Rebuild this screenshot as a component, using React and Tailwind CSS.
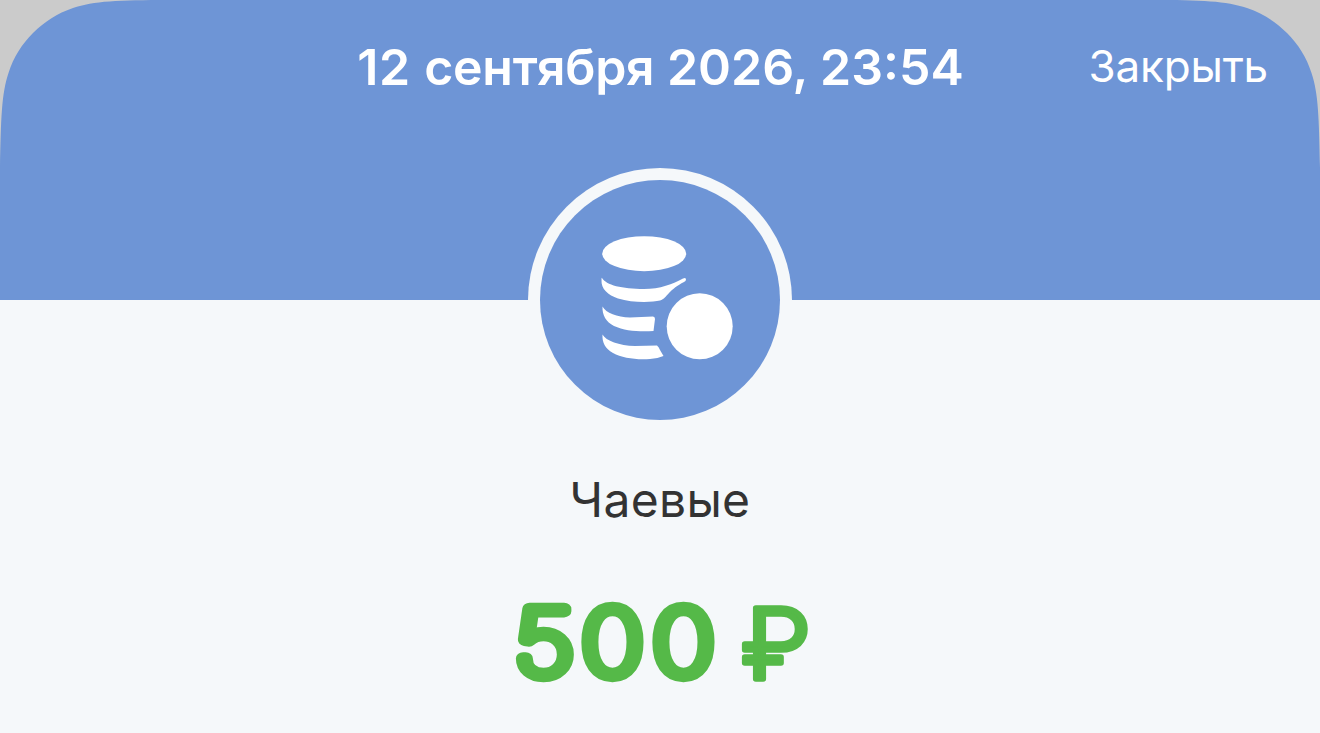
const corner = 'M0 0H168C118 0 94 1 73 8C57 13.500 45 21.500 33 33C22 44 13.500 57 8.500 73C1.500 94 1 118 0 168Z';

function CoinsIcon() {
  return (
    <svg viewBox="600 234 136 128" className="h-[128px] w-[136px] fill-white">
      <ellipse cx="644.200" cy="253.700" rx="42" ry="17.500" />
      <path d="M602 278C606 285 622 289 644 289C660 289 673 284 683 278.500Q686 277 686 279.500Q686 281 684 282C677 285.500 673 289 669 293C666 296 664 299.500 660 300.500C652 302.500 632 303 618 298.500C608 295 601 289 601.500 280Q601.500 277 602 278Z" />
      <path d="M602.500 306.500C606 313 617 317 630 317.500L653 316.500Q655 316.500 655 319L653.500 331C640 332 625 331 614 326C606 322 602 315 602.500 306.500Z" />
      <path d="M602.500 334.500C606 341 619 345.500 635 346L657 345.500Q659 347 660 350L663.500 356Q658 358.500 650 359C636 360 622 358 613 353C605 348.500 602 342 602.500 334.500Z" />
      <circle cx="699.700" cy="326.300" r="33" />
    </svg>
  );
}

export default function App() {
  return (
    <div className="h-[733px] w-full overflow-hidden font-['Inter',sans-serif]">
      <div className="relative flex h-full flex-col items-center bg-[#f5f8fa]">
        <header className="grid h-[300px] w-full shrink-0 grid-cols-[1fr_auto_1fr] items-start bg-[#6e95d6] text-white">
          <h1 className="col-start-2 pt-[37px] pl-px text-[50px] leading-[60px] font-semibold whitespace-nowrap">
            <span className="tracking-[0.7px]">12 </span>
            <span className="tracking-[-0.3px]">сентября</span> 2026, 23:54
          </h1>
          <button className="justify-self-end pt-[36px] pr-[52px] text-[44px] leading-[60px] tracking-[-0.2px]">Закрыть</button>
        </header>
        <svg viewBox="0 0 170 170" className="absolute top-0 left-0 h-[170px] w-[170px] fill-[#cbcbcb]">
          <path d={corner} />
        </svg>
        <svg viewBox="0 0 170 170" className="absolute top-0 right-0 h-[170px] w-[170px] -scale-x-100 fill-[#cbcbcb]">
          <path d={corner} />
        </svg>
        <div className="relative -mt-[132px] flex h-[264px] w-[264px] shrink-0 items-center justify-center rounded-full bg-[#f5f8fa]">
          <div className="flex h-[240px] w-[240px] items-center justify-center rounded-full bg-[#6e95d6]">
            <div className="-mt-[4px] pl-[16px]">
              <CoinsIcon />
            </div>
          </div>
        </div>
        <p className="mt-[38px] text-[48px] leading-[60px] tracking-[0.3px] text-[#333]">Чаевые</p>
        {/* amount uses a round-joined stroke for soft glyph corners */}
        <svg viewBox="480 560 360 160" className="mt-[31px] h-[160px] w-[360px] shrink-0 overflow-visible fill-[#55b948] stroke-[#55b948] [stroke-linejoin:round]">
          <text x="439.500 496.600 557.300" y="674.500" transform="scale(1.17 1)" className="stroke-[12.5px] text-[91px] font-thin">500</text>
          <text x="693" y="678" transform="scale(1.07 1)" className="stroke-[5.5px] text-[97px] font-light">₽</text>
        </svg>
      </div>
    </div>
  );
}
